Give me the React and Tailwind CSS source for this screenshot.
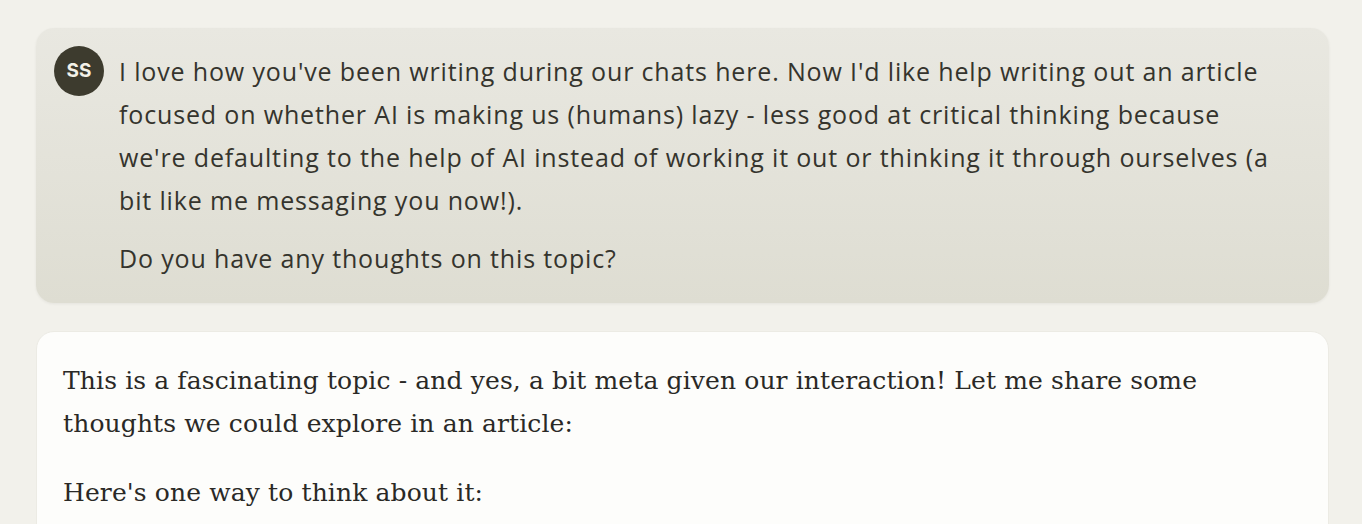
export default function App() {
  return (
    <div className="h-[524px] overflow-hidden bg-[#f2f1eb] pl-[36px] pr-[33px] pt-[28px]">
      {/* user message */}
      <div className="rounded-[18px] bg-gradient-to-b from-[#e9e8e1] to-[#deddd2] shadow-[0_1px_3px_rgba(0,0,0,0.06)] pl-[18px] pr-[40px] pt-[18px] pb-[23px] flex gap-[15px]">
        <div className="w-[50px] h-[50px] shrink-0 rounded-full bg-[#3d3b2e] flex items-center justify-center text-[#f3f1e8] text-[19px] font-bold font-['Inter',sans-serif]">
          SS
        </div>
        <div className="font-['Open_Sans',sans-serif] text-[25px] leading-[43px] tracking-[0.85px] text-[#35342d] pt-[4px] whitespace-nowrap">
          <p>
            I love how you've been writing during our chats here. Now I'd like help writing out an article
            <br />
            focused on whether AI is making us (humans) lazy - less good at critical thinking because
            <br />
            we're defaulting to the help of AI instead of working it out or thinking it through ourselves (a
            <br />
            bit like me messaging you now!).
          </p>
          <p className="mt-[15px]">Do you have any thoughts on this topic?</p>
        </div>
      </div>

      {/* assistant reply */}
      <div className="mt-[28px] rounded-t-[18px] bg-[#fdfdfb] border border-[#ecebe4] pl-[26px] pt-[27px] pb-[20px] font-['DejaVu_Serif',serif] text-[25px] leading-[43px] tracking-[0.12px] text-[#2a2926] whitespace-nowrap">
        <p>
          This is a fascinating topic - and yes, a bit meta given our interaction! Let me share some
          <br />
          thoughts we could explore in an article:
        </p>
        <p className="mt-[26px]">Here's one way to think about it:</p>
      </div>
    </div>
  );
}
